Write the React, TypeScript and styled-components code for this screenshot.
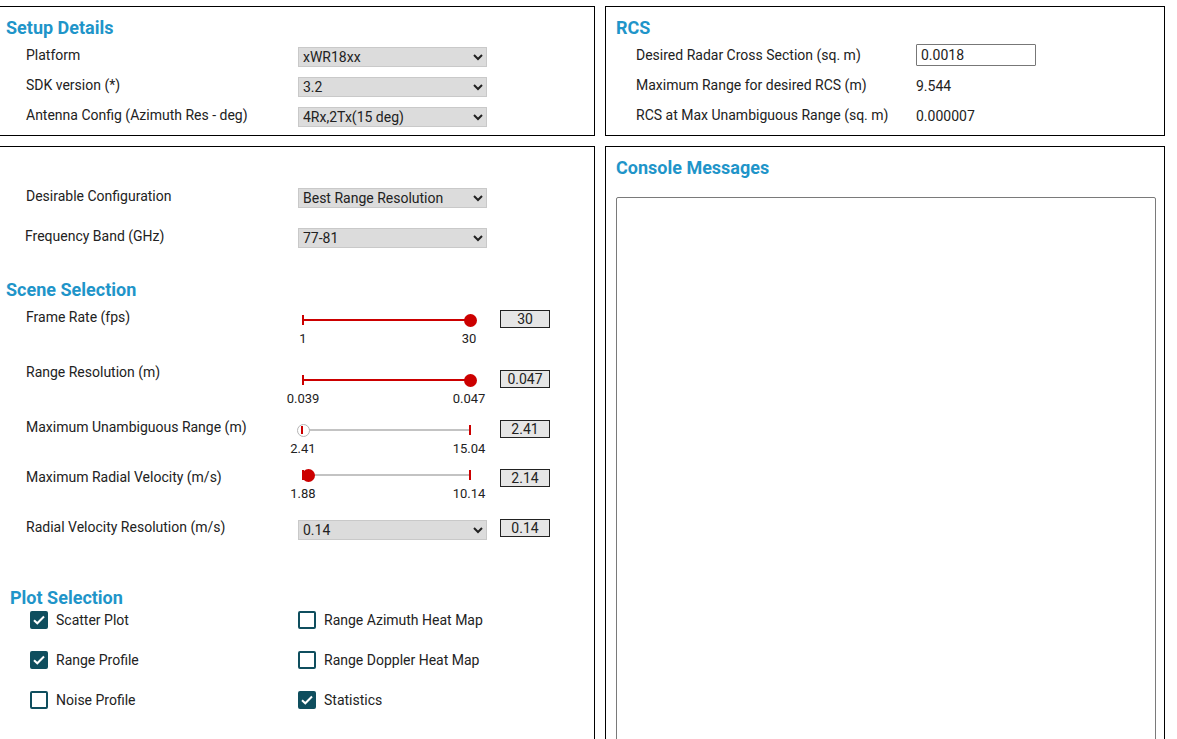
import React from "react";
import styled, { createGlobalStyle } from "styled-components";

const Global = createGlobalStyle`
  html, body { margin: 0; padding: 0; background: #fff; }
  body { font-family: Roboto, "Liberation Sans", sans-serif; color: #222; font-size: 14px; }
  * { box-sizing: border-box; }
`;

const BLUE = "#1f95c9";
const RED = "#cc0000";
const TEAL = "#0f4e5e";

const Page = styled.div`
  padding-top: 6px;
  display: grid;
  grid-template-columns: 595px 560px;
  grid-template-rows: 130px 620px;
  column-gap: 10px;
  row-gap: 10px;
`;

const Panel = styled.section<{ $left?: boolean }>`
  border: 1px solid #000;
  border-left: ${(p) => (p.$left ? "none" : "1px solid #000")};
  padding: ${(p) => (p.$left ? "10px 0 0 0" : "10px 0 0 10px")};
  overflow: hidden;
`;

const Heading = styled.h2<{ $x?: number; $mt?: number }>`
  margin: ${(p) => p.$mt ?? 0}px 0 0 ${(p) => p.$x ?? 0}px;
  font-size: 18px;
  line-height: 22px;
  font-weight: 700;
  color: ${BLUE};
`;

const Rows = styled.div<{ $mt: number; $gap?: number }>`
  margin-top: ${(p) => p.$mt}px;
  display: flex;
  flex-direction: column;
  gap: ${(p) => p.$gap ?? 0}px;
`;

const Row = styled.div<{ $pl: number; $col: number; $h?: number }>`
  display: grid;
  grid-template-columns: ${(p) => p.$col}px 189px 1fr;
  align-items: center;
  height: ${(p) => p.$h ?? 30}px;
  padding-left: ${(p) => p.$pl}px;
`;

const Label = styled.span`
  font-size: 14px;
  line-height: 20px;
  color: #222;
  padding-bottom: 4px;
  white-space: nowrap;
`;

const Value = styled.span`
  font-size: 14px;
  line-height: 20px;
  color: #222;
  padding-bottom: 2px;
`;

const Select = styled.select`
  width: 189px;
  height: 20px;
  font-family: Roboto, "Liberation Sans", sans-serif;
  font-size: 14px;
  color: #222;
  background: #dcdcdc;
  border: 1px solid #c9c9c9;
  border-radius: 0;
  padding: 0;
`;

const TextInput = styled.input`
  width: 120px;
  height: 22px;
  font-family: Roboto, "Liberation Sans", sans-serif;
  font-size: 14px;
  color: #222;
  border: 1px solid #777;
  border-radius: 1px;
  padding: 0 4px;
  margin-bottom: 4px;
`;

const SliderRow = styled.div<{ $h: number }>`
  display: grid;
  grid-template-columns: 272px 202px 50px;
  align-items: start;
  height: ${(p) => p.$h}px;
  padding-left: 26px;
`;

const SliderCell = styled.div<{ $top: number }>`
  padding-top: ${(p) => p.$top}px;
  padding-left: 5px;
`;

const Track = styled.div`
  position: relative;
  width: 167px;
  height: 12px;
`;

const Line = styled.div`
  position: absolute;
  left: 0;
  right: 0;
  top: 5px;
  height: 2px;
  background: #c3c3c3;
`;

const Fill = styled.div`
  position: absolute;
  left: 0;
  top: 5px;
  height: 2px;
  background: ${RED};
`;

const Tick = styled.div<{ $side: "left" | "right" }>`
  position: absolute;
  top: 1px;
  ${(p) => (p.$side === "left" ? "left: -1px;" : "right: -1px;")}
  width: 2px;
  height: 10px;
  background: ${RED};
`;

const Thumb = styled.div<{ $hollow?: boolean }>`
  position: absolute;
  top: -0.5px;
  width: 13px;
  height: 13px;
  margin-left: -6.5px;
  border-radius: 50%;
  background: ${(p) => (p.$hollow ? "#fff" : RED)};
  border: ${(p) => (p.$hollow ? "1.5px solid #b5b5b5" : "none")};
  overflow: hidden;
`;

const ThumbMark = styled.div`
  position: absolute;
  left: 3.5px;
  top: 1px;
  width: 2px;
  height: 8px;
  background: ${RED};
`;

const Scale = styled.div`
  display: flex;
  justify-content: space-between;
  width: 204px;
  margin-left: -19px;
  margin-top: 5px;
  font-size: 13px;
  line-height: 15px;
  color: #222;
`;

const ScaleEnd = styled.span`
  width: 38px;
  text-align: center;
`;

const Box = styled.div<{ $top: number }>`
  margin-top: ${(p) => p.$top}px;
  width: 50px;
  height: 18px;
  border: 1px solid #222;
  background: #e6e6e6;
  font-size: 14px;
  line-height: 16px;
  text-align: center;
  color: #222;
`;

const CheckGrid = styled.div`
  margin-top: -9px;
  padding-left: 30px;
  display: grid;
  grid-template-columns: 268px 1fr;
  grid-auto-rows: 40px;
`;

const CheckItem = styled.label`
  display: flex;
  align-items: center;
  gap: 8px;
  height: 40px;
  font-size: 14px;
  color: #222;
`;

const CheckBox = styled.span<{ $on: boolean }>`
  width: 18px;
  height: 18px;
  border-radius: 2px;
  border: 2px solid ${TEAL};
  background: ${(p) => (p.$on ? TEAL : "#fff")};
  display: flex;
  align-items: center;
  justify-content: center;
`;

const Console = styled.div`
  margin-top: 18px;
  margin-right: 8px;
  height: 600px;
  border: 1px solid #7a7a7a;
  border-radius: 2px;
`;

type SliderProps = {
  label: string;
  min: string;
  max: string;
  value: string;
  pct: number;
  filled: boolean;
  hollow?: boolean;
  h: number;
  track: number;
  box: number;
};

function SliderField(p: SliderProps) {
  return (
    <SliderRow $h={p.h}>
      <Label>{p.label}</Label>
      <SliderCell $top={p.track}>
        <Track>
          <Line />
          {p.filled && <Fill style={{ width: `${p.pct}%` }} />}
          <Tick $side="left" />
          {!p.filled && <Tick $side="right" />}
          <Thumb $hollow={p.hollow} style={{ left: `${p.pct}%` }}>
            {p.hollow && <ThumbMark />}
          </Thumb>
        </Track>
        <Scale>
          <ScaleEnd>{p.min}</ScaleEnd>
          <ScaleEnd>{p.max}</ScaleEnd>
        </Scale>
      </SliderCell>
      <Box $top={p.box}>{p.value}</Box>
    </SliderRow>
  );
}

const Check = ({ on, label }: { on: boolean; label: string }) => (
  <CheckItem>
    <CheckBox $on={on}>
      {on && (
        <svg width="12" height="10" viewBox="0 0 12 10">
          <path d="M1 5.2 L4.3 8.3 L11 1.5" fill="none" stroke="#fff" strokeWidth="2" />
        </svg>
      )}
    </CheckBox>
    {label}
  </CheckItem>
);

export default function App() {
  return (
    <>
      <Global />
      <Page>
        <Panel $left>
          <Heading $x={6}>Setup Details</Heading>
          <Rows $mt={3}>
            <Row $pl={26} $col={272}>
              <Label>Platform</Label>
              <Select defaultValue="xWR18xx">
                <option>xWR18xx</option>
              </Select>
            </Row>
            <Row $pl={26} $col={272}>
              <Label>SDK version (*)</Label>
              <Select defaultValue="3.2">
                <option>3.2</option>
              </Select>
            </Row>
            <Row $pl={26} $col={272}>
              <Label>Antenna Config (Azimuth Res - deg)</Label>
              <Select defaultValue="4Rx,2Tx(15 deg)">
                <option>4Rx,2Tx(15 deg)</option>
              </Select>
            </Row>
          </Rows>
        </Panel>

        <Panel>
          <Heading>RCS</Heading>
          <Rows $mt={3}>
            <Row $pl={20} $col={280}>
              <Label>Desired Radar Cross Section (sq. m)</Label>
              <TextInput defaultValue="0.0018" />
            </Row>
            <Row $pl={20} $col={280}>
              <Label>Maximum Range for desired RCS (m)</Label>
              <Value>9.544</Value>
            </Row>
            <Row $pl={20} $col={280}>
              <Label>RCS at Max Unambiguous Range (sq. m)</Label>
              <Value>0.000007</Value>
            </Row>
          </Rows>
        </Panel>

        <Panel $left>
          <Rows $mt={26} $gap={10}>
            <Row $pl={26} $col={272}>
              <Label>Desirable Configuration</Label>
              <Select defaultValue="Best Range Resolution">
                <option>Best Range Resolution</option>
              </Select>
            </Row>
            <Row $pl={25} $col={273}>
              <Label>Frequency Band (GHz)</Label>
              <Select defaultValue="77-81">
                <option>77-81</option>
              </Select>
            </Row>
          </Rows>
          <Heading $x={6} $mt={26}>Scene Selection</Heading>
          <Rows $mt={6}>
            <SliderField label="Frame Rate (fps)" min="1" max="30" value="30" pct={100} filled h={55} track={7} box={3} />
            <SliderField label="Range Resolution (m)" min="0.039" max="0.047" value="0.047" pct={100} filled h={55} track={12} box={8} />
            <SliderField label="Maximum Unambiguous Range (m)" min="2.41" max="15.04" value="2.41" pct={0} filled={false} hollow h={50} track={7} box={3} />
            <SliderField label="Maximum Radial Velocity (m/s)" min="1.88" max="10.14" value="2.14" pct={3} filled={false} h={50} track={2} box={2} />
            <SliderRow $h={40}>
              <Label>Radial Velocity Resolution (m/s)</Label>
              <SliderCell $top={3}>
                <Select defaultValue="0.14" style={{ marginLeft: -5 }}>
                  <option>0.14</option>
                </Select>
              </SliderCell>
              <Box $top={2}>0.14</Box>
            </SliderRow>
          </Rows>
          <Heading $x={10} $mt={30}>Plot Selection</Heading>
          <CheckGrid>
            <Check on label="Scatter Plot" />
            <Check on={false} label="Range Azimuth Heat Map" />
            <Check on label="Range Profile" />
            <Check on={false} label="Range Doppler Heat Map" />
            <Check on={false} label="Noise Profile" />
            <Check on label="Statistics" />
          </CheckGrid>
        </Panel>

        <Panel>
          <Heading>Console Messages</Heading>
          <Console />
        </Panel>
      </Page>
    </>
  );
}
